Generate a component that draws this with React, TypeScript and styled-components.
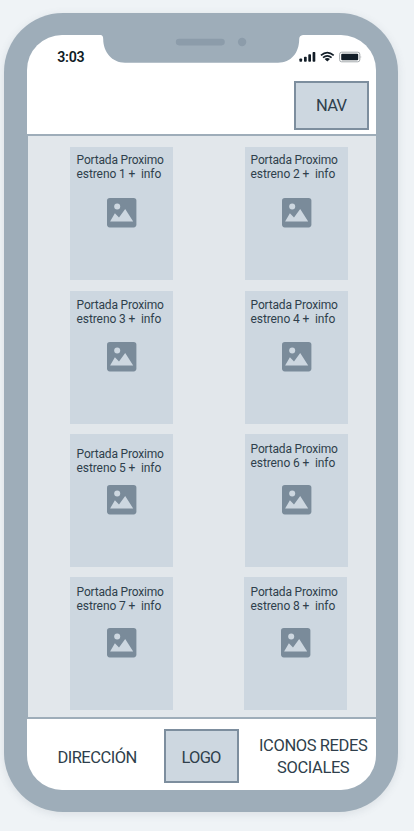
import React from "react";
import styled, { createGlobalStyle } from "styled-components";

const GlobalStyle = createGlobalStyle`
  * { box-sizing: border-box; }
  html, body { margin: 0; background: #eff3f6; }
  body { overflow: hidden; font-family: Roboto, "Liberation Sans", sans-serif; color: #2f3f4c; }
`;

const Page = styled.div`
  height: 831px;
  padding: 13.3px 0 0 4.3px;
`;

const Phone = styled.div`
  width: 394.2px;
  height: 799px;
  padding: 22.2px 22.3px 22.3px 22.5px;
  border-radius: 59px;
  background: #9eadb9;
  box-shadow: 0 2px 8px rgba(90, 105, 120, 0.14);
`;

const Screen = styled.div`
  display: flex;
  flex-direction: column;
  width: 100%;
  height: 100%;
  border-radius: 35px;
  overflow: hidden;
  background: #fff;
`;

const StatusBar = styled.div`
  display: grid;
  grid-template-columns: 74.6px 202px 1fr;
  height: 28.5px;
  flex: none;
`;

const Time = styled.div`
  padding: 13.6px 0 0 30.4px;
  font-size: 14.2px;
  line-height: 17px;
  font-weight: 600;
  letter-spacing: -0.25px;
  color: #101c26;
  white-space: nowrap;
`;

const StatusIcons = styled.div`
  display: flex;
  align-items: flex-start;
  padding-top: 15.5px;
  margin-left: -4px;
`;

const Toolbar = styled.div`
  display: flex;
  justify-content: flex-end;
  height: 70px;
  flex: none;
  padding: 17.2px 7.2px 0 0;
`;

const Tile = styled.div<{ $w: number; $h: number; $nudge?: number }>`
  display: flex;
  align-items: center;
  justify-content: center;
  width: ${(p) => p.$w}px;
  height: ${(p) => p.$h}px;
  padding-top: ${(p) => p.$nudge ?? 0}px;
  border: 2px solid #7d8e9e;
  background: #cdd7e0;
  font-size: 16.5px;
  line-height: 22px;
`;

const Label = styled.span<{ $spacing: number }>`
  letter-spacing: ${(p) => p.$spacing}px;
  margin-right: ${(p) => -p.$spacing}px;
  white-space: nowrap;
`;

const Gallery = styled.main`
  display: grid;
  grid-template-columns: 102.6px 102.6px;
  grid-template-rows: 132.8px 132.8px 132.8px 132.8px;
  column-gap: 72.4px;
  row-gap: 10.6px;
  height: 585px;
  flex: none;
  padding: 11.4px 0 0 42.2px;
  border: 2px solid #9eadb9;
  border-left-width: 1px;
  border-right: 0;
  background: #e2e7eb;
`;

const Card = styled.article<{ $shift: number; $drop: number }>`
  margin-left: ${(p) => p.$shift}px;
  margin-right: ${(p) => -p.$shift}px;
  margin-top: ${(p) => p.$drop}px;
  margin-bottom: ${(p) => -p.$drop}px;
  background: #cdd7e0;
`;

const CardTitle = styled.div<{ $top: number; $left: number }>`
  height: 50.8px;
  padding: ${(p) => p.$top}px 0 0 ${(p) => p.$left}px;
  font-size: 12px;
  line-height: 14px;
  white-space: pre;
`;

const Line = styled.div<{ $spacing: number }>`
  letter-spacing: ${(p) => p.$spacing}px;
`;

const CardImage = styled.svg`
  display: block;
  width: 29.4px;
  height: 29.4px;
  margin-left: 36.7px;
  overflow: visible;
`;

const Footer = styled.footer`
  display: grid;
  grid-template-columns: 137.2px 75px 1fr;
  align-items: start;
  height: 71px;
  padding-top: 10.2px;
  font-size: 16.5px;
  line-height: 22px;
`;

const Address = styled.div`
  padding: 17.5px 0 0 30.6px;
`;

const Social = styled.div`
  display: flex;
  flex-direction: column;
  align-items: center;
  padding: 5.6px 0 0 11.6px;
`;

const Notch = () => (
  <svg width="202" height="28.5" viewBox="0 0 202 28.5">
    <path
      d="M0 0H202Q198.2 .6 198.2 4C198.2 18 190 27.7 177 27.7H24C11 27.7 2.2 17 2.2 4Q2.2 .6 0 0Z"
      fill="#9eadb9"
    />
    <rect x="74.8" y="3.8" width="49" height="6.6" rx="3.3" fill="#8c9caa" />
    <circle cx="141.1" cy="7" r="4.2" fill="#8c9caa" />
  </svg>
);

const Indicators = () => (
  <svg width="64" height="13" viewBox="0 0 64 13">
    <g fill="#121d27">
      <rect x=".4" y="7.5" width="2.7" height="3.3" rx=".8" />
      <rect x="5" y="5.8" width="2.7" height="5" rx=".8" />
      <rect x="9.3" y="3.3" width="2.7" height="7.5" rx=".8" />
      <rect x="13.6" y="1" width="2.7" height="9.8" rx=".8" />
      <path d="M25.6 7.9Q28.3 6.3 31 7.9L28.3 10.5Z" />
      <rect x="42.2" y="2.8" width="17" height="6.5" rx="1" />
    </g>
    <g fill="none" stroke="#121d27" strokeWidth="1.7">
      <path d="M21.9 4.4Q28.3-1.1 34.7 4.4" />
      <path d="M24 6.7Q28.3 3.2 32.6 6.7" />
    </g>
    <rect x="40.6" y="1.2" width="20.2" height="9.6" rx="2" fill="none" stroke="#a6abae" />
    <path d="M61.6 4.4Q63 6 61.6 7.6Z" fill="#a6abae" />
  </svg>
);

const Picture = () => (
  <CardImage viewBox="0 0 29.4 29.4">
    <rect width="29.4" height="29.4" rx="2.8" fill="#7a8b9a" />
    <circle cx="10.2" cy="8.4" r="3" fill="#cdd7e0" />
    <path d="M3.1 23.5L7.9 15.2L12 19.6L18.2 10.9L26.2 23.5Z" fill="#cdd7e0" />
  </CardImage>
);

const releases = [
  { n: 1, top: 5.6, left: 6.6, shift: 0, drop: 0 },
  { n: 2, top: 5.6, left: 5.6, shift: 0, drop: 0 },
  { n: 3, top: 6.4, left: 6.6, shift: 0, drop: 0.6 },
  { n: 4, top: 6.4, left: 5.6, shift: 0, drop: 0.6 },
  { n: 5, top: 13, left: 6.6, shift: 0, drop: 0 },
  { n: 6, top: 8, left: 5.6, shift: 0, drop: 0 },
  { n: 7, top: 7.6, left: 6.6, shift: 0, drop: -0.4 },
  { n: 8, top: 7.6, left: 6.6, shift: -1, drop: -0.4 },
];

export default function App() {
  return (
    <>
      <GlobalStyle />
      <Page>
        <Phone>
          <Screen>
            <StatusBar>
              <Time>3:03</Time>
              <Notch />
              <StatusIcons>
                <Indicators />
              </StatusIcons>
            </StatusBar>
            <Toolbar>
              <Tile $w={75} $h={49}>
                <Label $spacing={-0.7}>NAV</Label>
              </Tile>
            </Toolbar>
            <Gallery>
              {releases.map((r) => (
                <Card key={r.n} $shift={r.shift} $drop={r.drop}>
                  <CardTitle $top={r.top} $left={r.left}>
                    <Line $spacing={-0.18}>Portada Proximo</Line>
                    <Line $spacing={-0.1}>{`estreno ${r.n} +  info`}</Line>
                  </CardTitle>
                  <Picture />
                </Card>
              ))}
            </Gallery>
            <Footer>
              <Address>
                <Label $spacing={-0.5}>DIRECCIÓN</Label>
              </Address>
              <Tile $w={75} $h={54} $nudge={3}>
                <Label $spacing={-0.8}>LOGO</Label>
              </Tile>
              <Social>
                <Label $spacing={-0.4}>ICONOS REDES</Label>
                <Label $spacing={-0.4}>SOCIALES</Label>
              </Social>
            </Footer>
          </Screen>
        </Phone>
      </Page>
    </>
  );
}
